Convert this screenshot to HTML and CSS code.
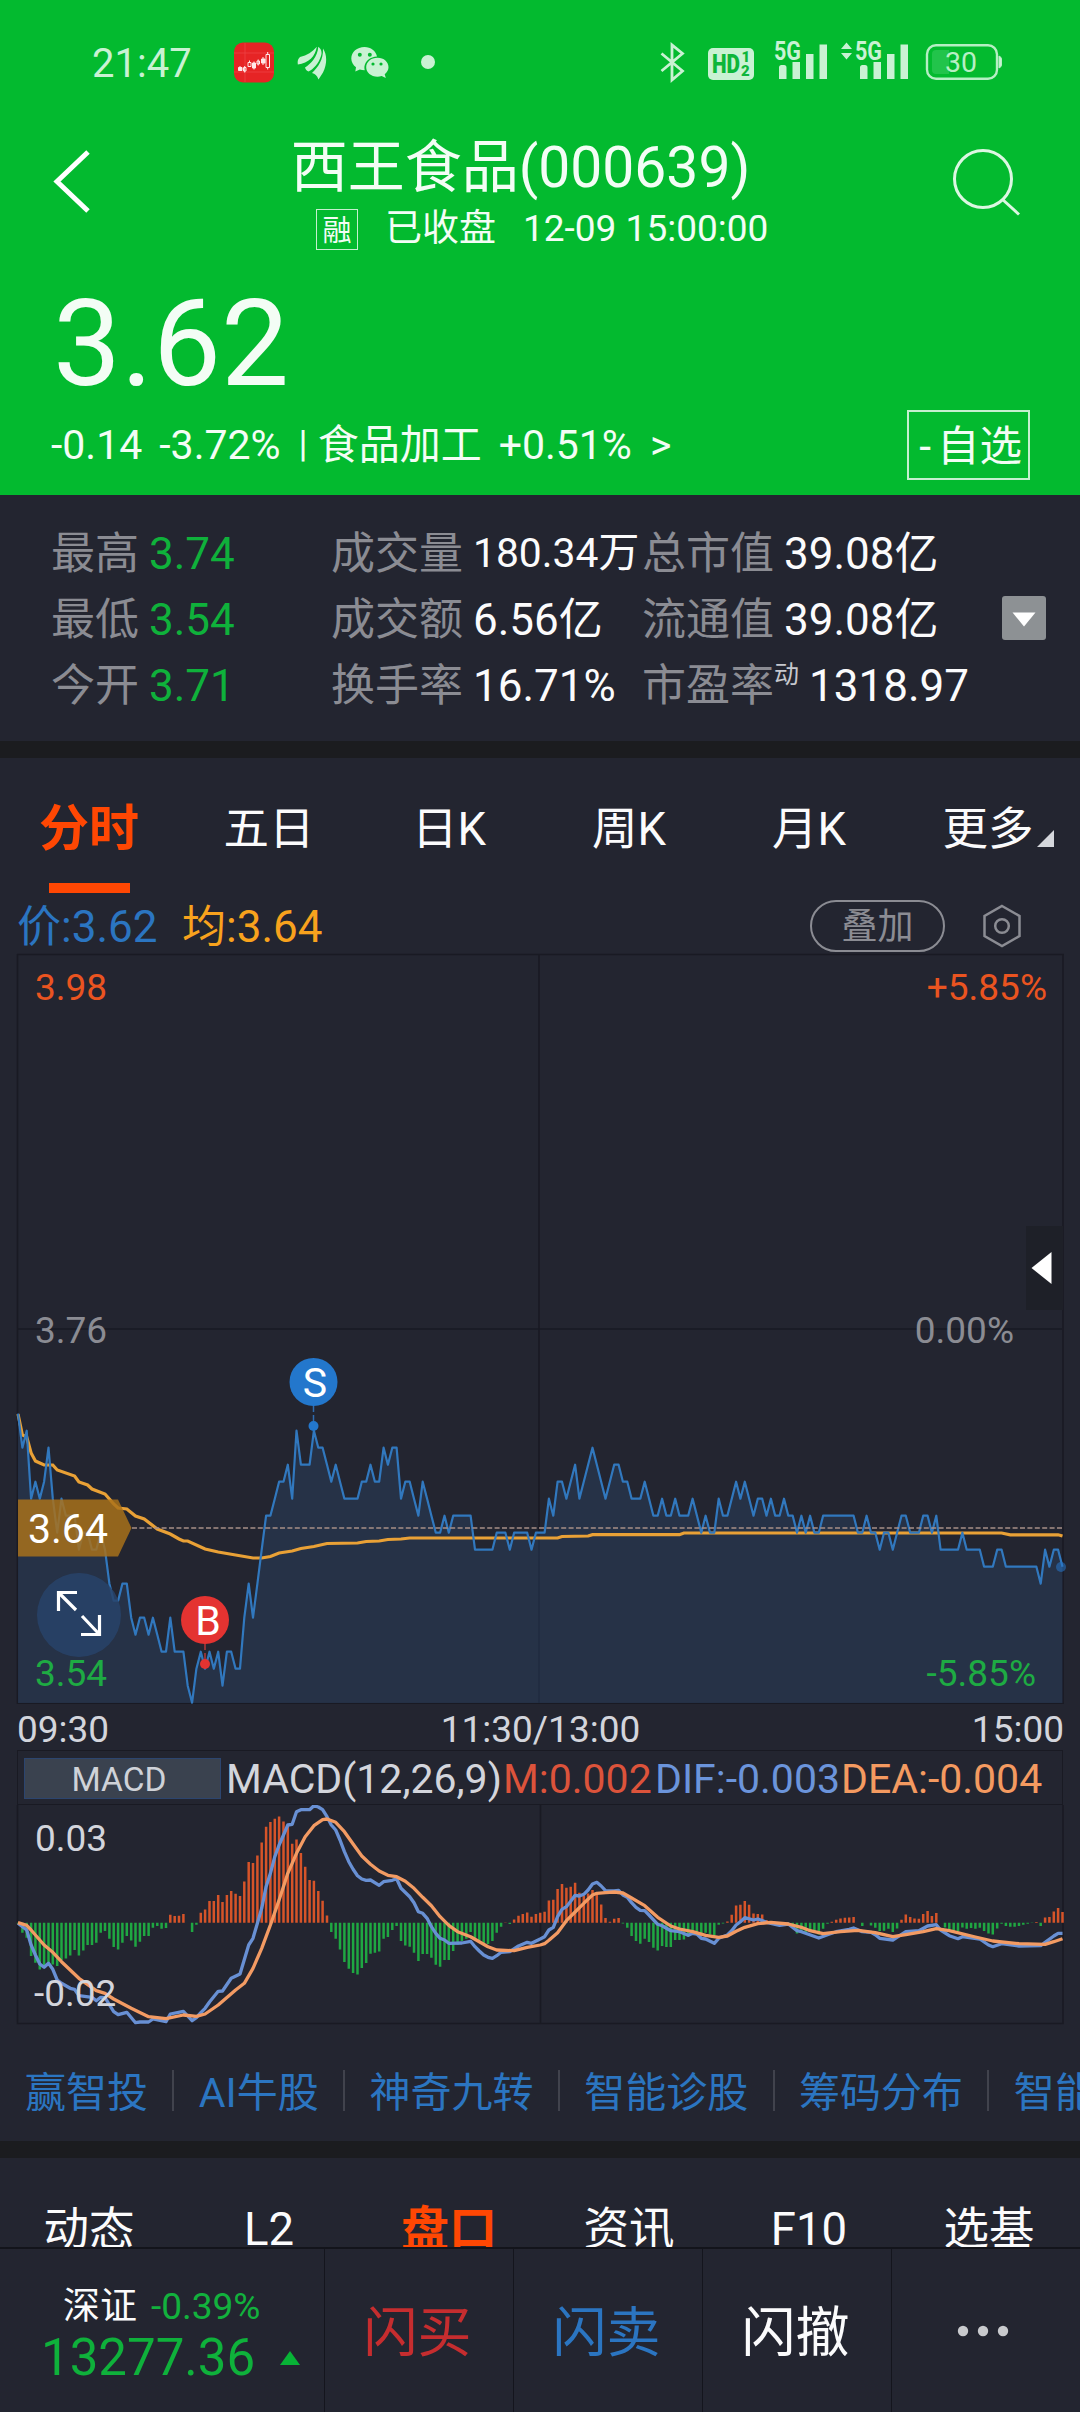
FILE: index.html
```html
<!DOCTYPE html>
<html lang="zh-CN">
<head>
<meta charset="utf-8">
<title>西王食品(000639)</title>
<link rel="stylesheet" href="styles.css">
</head>
<body>
<div class="app">
  <header class="header">
    <div class="status">
      <span class="clock">21:47</span>
      <svg class="status-left" width="230" height="70" viewBox="0 0 230 70">
        <rect x="14" y="12.500" width="40" height="40" rx="9" fill="#e62425"/>
        <path d="M14 23h40M14 42h40M25 13v39" stroke="#ee4548" stroke-width=".7"/>
        <g fill="#ffe9e9" stroke="#ffe9e9" stroke-width="1">
          <path d="M18.500 37.500h3.500v3h-3.500zM32.500 33h3v5h-3zM41.500 29h3.500v4h-3.500z"/>
          <path d="M20 36v2M34 31.500v8M43 27v8"/>
          <path fill="none" d="M23.500 37.500h2.500v3.500h-2.500zM28 32.500h3v4h-3zM37 31h2.500v3h-2.500zM46 24.500h3.500v13h-3.500zM24.700 36v6.500M29.500 30.500v2M38.200 29.500v6M47.700 22v2.500M47.700 37.500v2"/>
        </g>
        <g fill="#c9f2d3">
          <path d="M77.800 34.500C77.300 31 78 28.800 80 27C87 25.500 92.500 22 96.800 16.800C95.500 26 88.500 33.500 77.800 34.500Z"/>
          <path d="M85 37.500C91 33.500 97.500 27 98.300 16.700C101.500 19 102.300 22.500 101 26C98.500 34 93.500 39 88.500 41.500C86.300 40.500 85.300 39 85 37.500Z"/>
          <path d="M92 43C98 37 103.500 30 103 18.500C107 24.500 107.500 33.500 103 42.500L98.500 49.500C97 45.500 95 43.500 92 43Z"/>
          <path fill-rule="evenodd" d="M144.500 17C137 17 131.300 22 131.300 28.500C131.300 32 133 35 136 37.200L135.300 41.500L139.800 39.500Q142 40.200 144.700 40.300Q144.300 38.500 144.400 36.700C145 31 150.500 26.700 157 26.500C156 21 150.800 17 144.500 17ZM139.800 22.800a2 2 0 1 1 0 4a2 2 0 1 1 0-4zM149.800 22.800a2 2 0 1 1 0 4a2 2 0 1 1 0-4z"/>
          <path fill-rule="evenodd" d="M157.500 27.800C151 27.800 146.200 32 146.200 37.300C146.200 42.500 151 46.800 157.500 46.800Q159.500 46.800 161.700 46L165.800 48L164.700 44.200C167 42.500 168.500 40 168.500 37.300C168.500 32 164 27.800 157.500 27.800ZM153 32.400a1.600 1.600 0 1 1 0 3.200a1.600 1.600 0 1 1 0-3.200zM161 32.400a1.600 1.600 0 1 1 0 3.200a1.600 1.600 0 1 1 0-3.200z"/>
          <circle cx="208" cy="32" r="7"/>
        </g>
      </svg>
      <svg class="status-right" width="380" height="70" viewBox="0 0 380 70" fill="#c9f2d3">
        <path d="M21.500 23.500L42.500 41L32 50V15L42.500 23.500L21.500 41" fill="none" stroke="#c9f2d3" stroke-width="2.800"/>
        <rect x="68" y="18" width="46" height="32" rx="5"/>
        <text class="hd" x="72" y="42.800" textLength="28" lengthAdjust="spacingAndGlyphs">HD</text>
        <text class="hd-n" x="101.500" y="31.500">1</text><text class="hd-n" x="101" y="46">2</text>
        <text class="g5" x="134" y="29.500" textLength="27" lengthAdjust="spacingAndGlyphs">5G</text>
        <path d="M139 37.500q0-2.500 2.500-2.500h2.500q2.500 0 2.500 2.500V49H139zM152.500 32h7.500v17h-7.500zM166 24h7.500v25H166zM179.500 14.500h7.500V49h-7.500z"/>
        <path d="M206.500 12.500l5.500 6.500h-11zM206.500 29.500l5.500-6.500h-11z"/>
        <text class="g5" x="215" y="29.500" textLength="27" lengthAdjust="spacingAndGlyphs">5G</text>
        <path d="M220 37.500q0-2.500 2.500-2.500h2.500q2.500 0 2.500 2.500V49H220zM233.500 32h7.500v17h-7.500zM247 24h7.500v25H247zM260.500 14.500h7.500V49h-7.500z"/>
        <rect x="287" y="15.200" width="70" height="33.600" rx="9" fill="none" stroke="#b6efc4" stroke-width="2.400"/>
        <path d="M296 20h13v24h-13q-4 0-4-4V24q0-4 4-4z" fill="#22c44b"/>
        <path d="M359 26q2.500 1 2.500 3v6q0 2-2.500 3z" stroke="#b6efc4"/>
        <text class="bat" x="305" y="42">30</text>
      </svg>
    </div>
    <div class="titlebar">
      <svg class="back" width="50" height="70" viewBox="0 0 50 70"><path d="M38 5L7 34.500L38 64" fill="none" stroke="#fff" stroke-width="5"/></svg>
      <div class="title-mid">
        <h1 class="title">西王食品(000639)</h1>
        <div class="subtitle"><span class="badge">融</span><span class="closed">已收盘</span><span>12-09 15:00:00</span></div>
      </div>
      <svg class="search" width="76" height="76" viewBox="0 0 76 76" fill="none" stroke="#dcf7e2" stroke-width="3"><circle cx="34" cy="35" r="28.500"/><path d="M53 55L70 70.500"/></svg>
    </div>
    <div class="price">3.62</div>
    <div class="change">
      <span class="delta">-0.14</span><span class="pct">-3.72%</span><span class="bar">|</span><span class="sector">食品加工</span><span>+0.51%</span><span class="more-sector">&gt;</span>
      <span class="watch"><span class="minus">-</span>自选</span>
    </div>
  </header>

  <section class="stats">
    <div class="stat-grid">
      <div class="stat"><span class="lbl">最高</span><b class="down">3.74</b></div>
      <div class="stat"><span class="lbl">成交量</span><b class="fit">180.34万</b></div>
      <div class="stat"><span class="lbl">总市值</span><b>39.08亿</b></div>
      <div class="stat"><span class="lbl">最低</span><b class="down">3.54</b></div>
      <div class="stat"><span class="lbl">成交额</span><b>6.56亿</b></div>
      <div class="stat"><span class="lbl">流通值</span><b>39.08亿</b></div>
      <div class="stat"><span class="lbl">今开</span><b class="down">3.71</b></div>
      <div class="stat"><span class="lbl">换手率</span><b>16.71%</b></div>
      <div class="stat"><span class="lbl">市盈率</span><sup>动</sup><b>1318.97</b></div>
    </div>
    <svg class="expand" width="44" height="44" viewBox="0 0 44 44"><rect width="44" height="44" rx="3" fill="#8d9194"/><path d="M10.500 16.500h23L22 30.500z" fill="#fff"/></svg>
  </section>

  <nav class="tabs">
    <span class="tab active">分时</span><span class="tab">五日</span><span class="tab">日K</span><span class="tab">周K</span><span class="tab">月K</span><span class="tab has-more">更多<svg width="17" height="17" viewBox="0 0 17 17"><path d="M17 0V17H0z" fill="#d5d7dc"/></svg></span>
  </nav>

  <div class="legend">
    <span class="l-price">价:3.62</span><span class="l-avg">均:3.64</span>
    <span class="overlay">叠加</span>
    <svg class="settings" width="40" height="44" viewBox="0 0 40 44" fill="none" stroke="#8b8c93" stroke-width="2.500"><path d="M20 2L37.500 12V32L20 42L2.500 32V12z"/><circle cx="20" cy="22" r="6.800"/></svg>
  </div>

  <svg class="chart" width="1080" height="751" viewBox="0 953 1080 751">
    <g class="grid"><path d="M17 954.500H1064M17 1329H1062M17 1703.500H1064M17.500 954V1704M539 954V1704M1063 954V1704"/></g>
    <text class="ax grey" x="35" y="1342.500">3.76</text>
    <text class="ax grey" x="1014" y="1342.500" text-anchor="end">0.00%</text>
    <polygon id="area" class="area"/>
    <polyline id="avg" class="avg"/>
    <polyline id="line" class="line"/>
    <circle cx="1061" cy="1567" r="5" fill="#2676ca" opacity=".55"/>
    <path d="M132 1528H1062" class="dash"/>
    <text class="ax red" x="35" y="1000">3.98</text>
    <text class="ax red" x="1047" y="1000" text-anchor="end">+5.85%</text>
    <text class="ax green" x="1036" y="1686" text-anchor="end">-5.85%</text>
    <path d="M18 1499.500H118L131.500 1528L118 1556.500H18z" fill="#a9711a" fill-opacity=".84"/>
    <text x="28" y="1543" class="tagtext">3.64</text>
    <circle cx="79" cy="1615" r="42" fill="#28436a" fill-opacity=".85"/>
    <path d="M58.500 1611V1592.500H77M59 1593L76 1610M82 1616L99 1634M81 1634.500H99.500V1615" fill="none" stroke="#fff" stroke-width="3.200"/>
    <text class="ax green" x="35" y="1686">3.54</text>
    <path d="M313.500 1405V1426" class="mark-s"/><circle cx="313.500" cy="1382" r="24" fill="#2377cc"/><circle cx="313.500" cy="1426" r="5" fill="#2377cc"/>
    <text x="315" y="1397" class="mark">S</text>
    <path d="M205 1643V1664" class="mark-b"/><circle cx="205" cy="1620" r="24" fill="#e43331"/><circle cx="205" cy="1664" r="5" fill="#e43331"/>
    <text x="208" y="1635" class="mark">B</text>
    <rect x="1026" y="1226" width="37" height="84" fill="#1e2028"/><path d="M1051.500 1252V1284L1031.500 1268z" fill="#fff"/>
  </svg>

  <div class="times"><span>09:30</span><span>11:30/13:00</span><span>15:00</span></div>

  <div class="macd-head"><span class="macd-btn">MACD</span><span class="m-name">MACD(12,26,9)</span><span class="m-m">M:0.002</span><span class="m-dif">DIF:-0.003</span><span class="m-dea">DEA:-0.004</span></div>
  <svg class="macd" width="1080" height="220" viewBox="0 1805 1080 220">
    <g class="grid"><path d="M17.500 1805V2023.500H1063V1805M540.500 1805V2023"/></g>
    <path id="up" stroke="#d65429" stroke-width="2.500"/><path id="dn" stroke="#1fa742" stroke-width="2.500"/>
    <polyline id="dif" class="dif"/><polyline id="dea" class="dea"/>
    <text class="ax pale" x="35" y="1851">0.03</text><text class="ax pale" x="34" y="2005.500">-0.02</text>
  </svg>

  <nav class="links"><span>赢智投</span><i></i><span>AI牛股</span><i></i><span>神奇九转</span><i></i><span>智能诊股</span><i></i><span>筹码分布</span><i></i><span>智能盯盘</span></nav>

  <nav class="tabs lower"><span class="tab">动态</span><span class="tab">L2</span><span class="tab active">盘口</span><span class="tab">资讯</span><span class="tab">F10</span><span class="tab">选基</span></nav>

  <footer class="bottom">
    <div class="index"><div class="idx-top"><span>深证</span><em>-0.39%</em></div><div class="idx-val">13277.36<svg width="20" height="14" viewBox="0 0 20 14"><path d="M10 0L20 14H0z" fill="#08b336"/></svg></div></div>
    <span class="act buy">闪买</span><span class="act sell">闪卖</span><span class="act">闪撤</span>
    <span class="act dots"><svg width="56" height="12" viewBox="0 0 56 12" fill="#c9cacd"><circle cx="8" cy="6" r="5.200"/><circle cx="28" cy="6" r="5.200"/><circle cx="48" cy="6" r="5.200"/></svg></span>
  </footer>
</div>
<script src="chart.js"></script>
</body>
</html>
```
FILE: styles.css
```css
* { box-sizing: border-box; }
body { margin: 0; background: #232530; }
.app {
  width: 1080px; height: 2412px; overflow: hidden;
  display: flex; flex-direction: column;
  background: #232530; color: #fbfbfc;
  font-family: Roboto, "Noto Sans CJK SC", sans-serif;
  line-height: 1.172;
  white-space: nowrap;
}
.app > * { flex-shrink: 0; }
svg { display: block; flex-shrink: 0; }

.header { height: 495px; background: #03ba2f; color: #f3fdf5; display: flex; flex-direction: column; }
.status { height: 124px; padding: 30px 60px 0 92px; display: flex; align-items: flex-start; color: #c9f2d3; }
.clock { width: 128px; font-size: 40px; line-height: 67px; }
.status-right { margin-left: 190px; }
.hd { font: 900 25px Roboto; fill: #0db63a; }
.hd-n { font: 900 15px Roboto; fill: #0db63a; }
.g5 { font: 700 25px Roboto; }
.bat { font: 400 28.500px Roboto; fill: #b6efc4; }

.titlebar { height: 138px; padding: 0 55px 0 50px; display: flex; align-items: flex-start; }
.back { margin-top: 23px; }
.title-mid { flex: 1; padding-left: 29px; }
.title { margin: 0; text-align: center; font-size: 57px; line-height: 88px; height: 84px; font-weight: 400; padding-right: 37px; }
.subtitle { display: flex; align-items: center; height: 42px; padding-left: 187px; font-size: 37px; }
.badge { width: 42px; height: 41px; margin-right: 27px; border: 1.500px solid #c5f0cf; font-size: 29px; line-height: 42px; text-align: center; }
.closed { margin-right: 27px; }
.search { margin-top: 20px; }
.price { height: 146px; padding-left: 53px; font-size: 121px; line-height: 164px; }
.change { display: flex; align-items: center; height: 76px; padding: 0 50px 2px 51px; font-size: 41px; }
.pct { margin-left: 17px; }
.bar { margin: -2px 10px 0 18px; font-size: 37px; }
.sector { margin-right: 17px; }
.more-sector { margin-left: 18px; }
.watch { margin: 0 0 0 auto; width: 123px; height: 70px; border: 2px solid #c5f0cf; display: flex; align-items: center; justify-content: flex-end; padding: 3px 6px 0 0; font-size: 42.500px; }
.minus { margin-right: 6px; }

.stats { height: 246px; padding: 26px 34px 0 51px; display: flex; align-items: flex-start; }
.stat-grid { display: grid; grid-template-columns: 280px 311px 360px; grid-auto-rows: 66px; margin-top: 1px; }
.stat { display: flex; align-items: center; font-size: 44px; }
.stat b { font-weight: 400; margin-left: 10px; }
.stat b.fit { font-size: 40.800px; margin-top: -3px; }
.stat b.down { color: #0fb13b; }
.lbl { color: #8b8c93; }
.stat sup { font-size: 25px; line-height: 30px; align-self: flex-start; margin-top: 6px; color: #c6c8ce; }
.expand { margin-top: 75px; }

.tabs { height: 160px; border-top: 17px solid #1b1c1f; display: grid; grid-template-columns: repeat(6, 180px); }
.tab { display: flex; justify-content: center; align-items: center; height: 140px; padding: 3px 2px 0 0; font-size: 45.500px; }
.tab.active { color: #ff4703; font-weight: 700; font-size: 50px; position: relative; }
.tabs:not(.lower) .active::after { content: ""; position: absolute; left: 49px; bottom: 5px; width: 81px; height: 10px; background: #ff4703; }
.has-more svg { margin: 18px 0 0 3px; }
.tab.has-more { padding-left: 18px; }

.legend { height: 52px; margin-top: -1px; padding: 0 58px 0 17px; display: flex; align-items: center; font-size: 44px; }
.l-price { color: #2b75c1; width: 165px; padding-top: 3px; }
.l-avg { color: #f8a21d; padding-top: 3px; }
.overlay { margin-left: auto; width: 135px; height: 52px; border: 2px solid #8b8c93; border-radius: 26px; color: #8b8c93; font-size: 36px; line-height: 51px; text-align: center; }
.settings { margin-left: 37px; }

.chart { margin-top: 1px; }
.grid path { fill: none; stroke: #191a23; stroke-width: 1.600; }
.ax { font-size: 37px; }
.grey { fill: #8b8c93; }
.red { fill: #ea5420; }
.green { fill: #1eab43; }
.pale { fill: #d3d5dc; }
.area { fill: #2b4468; fill-opacity: .42; }
.avg { fill: none; stroke: #e9a136; stroke-width: 3.200; }
.line { fill: none; stroke: #3178be; stroke-width: 2.200; stroke-linejoin: round; }
.dash { stroke: #a78f87; stroke-width: 1.600; stroke-dasharray: 5 2.400; }
.tagtext { font-size: 41px; fill: #fff; }
.mark { font-size: 41px; fill: #fff; text-anchor: middle; }
.mark-s { stroke: #2f6caf; stroke-width: 1.500; stroke-dasharray: 7 3; }
.mark-b { stroke: #b13838; stroke-width: 1.500; stroke-dasharray: 7 3; }

.times { height: 46px; padding: 5px 16px 0 17px; display: flex; justify-content: space-between; align-items: center; font-size: 37px; color: #d3d5dc; }
.macd-head { height: 55px; margin: 0 17px; border: 1.500px solid #191a23; display: flex; align-items: center; font-size: 41px; padding: 2px 0 0 6px; }
.macd-btn { width: 197px; height: 41px; margin: 0 5px 0 0; padding-right: 7px; background: #3a424f; border: 1.500px solid #2c456f; color: #cfd2d8; font-size: 33.500px; line-height: 41px; text-align: center; }
.m-name { color: #d3d5dc; width: 277px; padding-top: 2px; }
.m-m { color: #dc533b; width: 152px; padding-top: 2px; }
.m-dif { color: #6b94db; width: 186px; padding-top: 2px; }
.m-dea { color: #f49a60; padding-top: 2px; }
.dif { fill: none; stroke: #6890d4; stroke-width: 3.300; stroke-linejoin: round; }
.dea { fill: none; stroke: #f39b63; stroke-width: 3.300; stroke-linejoin: round; }

.links { height: 116px; padding: 20px 0 0 25px; display: flex; align-items: center; gap: 24.400px; font-size: 41px; color: #2b75c1; }
.links i { width: 2px; height: 41px; background: #41434d; flex-shrink: 0; margin-top: -6px; }
.links span { flex-shrink: 0; }

.lower { height: 106px; overflow: hidden; }
.lower .tab { height: 140px; padding-top: 4px; }
.lower .active { font-size: 48px; }

.bottom { height: 165px; border-top: 2px solid #13141b; display: grid; grid-template-columns: 325px 189px 189px 189px 188px; }
.bottom > * { border-right: 1.500px solid #14151d; }
.bottom > :last-child { border: 0; }
.index { padding: 36px 0 0 41px; }
.idx-top { display: flex; align-items: center; height: 44px; padding-left: 22px; font-size: 37px; }
.idx-top em { font-style: normal; color: #12b13d; margin-left: 14px; }
.idx-val { display: flex; align-items: center; height: 58px; font-size: 51px; color: #0fb13b; gap: 25px; }
.act { display: flex; align-items: center; justify-content: center; font-size: 54px; padding: 7px 3px 0 0; }
.dots { padding: 0 6px 0 0; }
.buy { color: #c62d2f; }
.sell { color: #2b75c1; }
```
FILE: chart.js
```js
// Minute index (0-240) to x coordinate.
const X = i => (18 + i * 4.352).toFixed(1);
const poly = (id, data, y) =>
  document.getElementById(id).setAttribute('points', data.map(([i, v]) => X(i) + ',' + y(v).toFixed(1)).join(' '));
const parse = s => s.trim().split(/\s+/).map(p => p.split(':').map(Number));

// Price, in cents above 3.54.
const price = parse(`0:17 1:15 2:16 3:12 4:13 5:12 6:13 7:15 8:12 9:10 10:12 11:11 13:11 14:9 15:10 16:10 17:9 18:9 19:10 20:9
21:7 22:6 23:6 24:7 25:7 26:5 27:4 28:5 29:5 30:4 31:5 32:4 33:3 34:3 35:5 36:3 38:3 39:1 40:0 41:2 42:3 43:2 44:3 45:2 46:3 47:1
48:3 49:3 50:2 51:2 52:5 53:7 54:5 55:7 56:9 57:11 58:11 59:12 60:13 61:13 62:14 63:12 64:16 65:14 67:14 68:16 69:15 70:15 71:14
72:13 73:14 74:13 75:12 78:12 79:13 80:13 81:14 82:13 83:13 84:15 85:14 86:15 87:15 88:12 89:13 90:13 91:12 92:11 93:13 94:12 95:11
96:10 97:10 98:11 99:10 100:11 104:11 105:9 109:9 110:10 112:10 113:9 114:10 117:10 118:9 119:10 121:10 122:12 123:11 124:13 125:13
126:12 127:13 128:14 129:12 132:15 135:12 137:14 138:14 139:13 140:13 141:12 143:12 144:13 146:11 147:11 148:12 149:11 150:11
151:12 152:11 154:11 155:12 157:10 158:11 159:10 160:10 161:12 162:11 163:11 165:13 166:12 167:13 169:11 170:12 171:12 172:11
173:12 174:11 175:11 176:12 177:11 178:11 179:10 180:11 181:10 182:11 183:10 184:10 185:11 192:11 193:10 194:10 195:11 196:10
197:10 198:9 199:10 200:10 201:9 202:10 203:11 204:11 205:10 207:10 208:11 209:11 210:10 211:11 212:9 216:9 217:10 218:9 221:9
222:8 224:8 225:9 226:9 227:8 234:8 235:7 236:9 237:8 238:9 239:9 240:8`);
const priceY = v => 1702.7 - v * 17;
poly('line', price, priceY);
document.getElementById('area').setAttribute('points',
  '18,1703 ' + price.map(([i, v]) => X(i) + ',' + priceY(v).toFixed(1)).join(' ') + ' 1062.5,1703');

// Average price.
const avg = parse(`0:1414 1:1435 2:1437 3:1453 4:1461 5:1463 6:1465 8:1465 9:1470 13:1476 14:1482 16:1485 17:1489 20:1494
21:1499 22:1504 23:1508 25:1509 27:1516 29:1519 32:1529 35:1534 37:1539 38:1541 39:1541 43:1549 46:1552 50:1555 54:1558
56:1558 58:1556.5 60:1553 63:1551 65:1548.5 68:1546.5 71:1543.5 78:1543 80:1541.5 83:1541 85:1539.5 88:1539 90:1538 124:1538
125:1536.5 131:1536 132:1534.7 152:1534.7 153:1533 226:1533 228:1534.8 239:1534.8 240:1536`);
poly('avg', avg, v => v);

// Histogram, one value per minute.
const bars = `-2 -30 -45 -100 -120 -140 -130 -120 -125 -130 -112 -107 -98 -82 -98 -83 -67 -67 -60 -30 -25 -48 -73 -80 -60 -40 -53 -72
-57 -40 -40 -15 -10 -18 -16 24 20 21 26 0 -28 -6 30 40 65 65 83 62 83 95 87 80 124 182 179 202 241 288 302 312 319 304 290 237 250
209 168 128 126 95 66 22 -28 -48 -80 -118 -138 -151 -155 -136 -121 -93 -90 -86 -48 -43 -22 -10 -55 -68 -72 -90 -115 -94 -94 -105
-126 -132 -112 -112 -85 -66 -55 -48 -28 -48 -53 -62 -64 -55 -30 -12 1 -4 10 21 26 31 18 26 30 33 67 69 101 116 105 108 120 90 82
88 98 85 55 14 3 12 14 -2 -15 -40 -55 -63 -48 -58 -75 -83 -70 -73 -73 -52 -52 -50 -42 -30 -35 -38 -30 -35 -38 -6 -2 4 24 52 54 65
54 28 26 25 8 5 -5 -8 -5 -4 -15 -32 -25 -30 -28 -30 -35 -18 -3 3 9 13 15 16 17 0 -10 0 -8 -15 -25 -24 -18 -28 -17 9 25 17 13 12
26 35 20 29 0 -14 -25 -28 -26 -14 -18 -16 -18 -15 -25 -32 -35 -17 -3 -10 -12 -12 -10 -6 -3 -1 2 -10 16 17 34 44 32`.split(/\s+/).map(Number);
let up = '', dn = '';
bars.forEach((v, i) => {
  const d = `M${X(i)} 1922.7v${(-v / 3).toFixed(1)}`;
  if (v > 0) up += d; else if (v < 0) dn += d;
});
document.getElementById('up').setAttribute('d', up);
document.getElementById('dn').setAttribute('d', dn);

const macdY = v => 1700 + v / 3;
poly('dif', parse(`0:670 2:690 3:735 4:765 5:792 6:802 7:790 8:808 9:840 10:850 12:865 13:868 14:887 17:892 18:902 19:892 20:893
22:935 23:944 25:937 27:968 28:966 30:966 31:957 34:965 35:942 38:934 39:948 40:962 41:953 42:938 43:925 44:906 46:874 47:873
49:835 51:822 53:735 54:715 55:670 56:625 57:560 58:520 59:470 60:435 61:405 62:375 63:373 64:335 65:329 67:329 68:317 69:321
70:329 71:350 72:375 73:390 74:420 75:455 76:485 77:508 78:527 79:537 80:541 81:540 83:556 84:545 86:541 87:536 88:565 90:590
91:608 92:635 93:640 94:655 95:680 96:700 97:715 98:720 99:730 102:729 104:724 105:740 106:753 107:765 108:772 109:775 110:767
111:757 113:755 115:738 117:727 118:730 120:717 121:710 122:690 123:682 124:650 125:628 126:620 127:604 128:586 129:588 130:583
131:570 132:552 133:547 134:558 135:572 137:573 138:571 139:585 140:592 141:608 142:622 143:631 144:632 145:645 147:673 148:677
150:692 152:695 154:706 155:700 156:702 157:715 158:717 160:730 161:715 163:705 164:692 165:675 166:665 167:653 169:660 170:657
172:667 175:676 177:672 179:692 180:695 184:714 186:704 188:695 191:688 192:684 194:695 196:697 197:704 198:715 201:720 203:703
204:695 207:692 209:678 211:674 212:690 214:707 216:716 217:710 221:717 223:735 224:740 226:731 230:738 235:737 236:727 238:708
239:700 240:700`), macdY);
poly('dea', parse(`0:668 2:676 3:690 4:705 6:735 8:757 10:785 14:835 18:872 20:880 22:897 26:925 30:950 34:956 38:945 41:949
43:942 46:915 50:870 52:850 54:805 56:745 58:675 60:600 62:520 64:460 66:410 68:377 70:359 71:357 73:367 75:395 77:432 79:468
81:493 83:513 85:526 87:530 89:544 91:565 93:592 95:617 97:650 99:676 101:695 104:710 106:725 108:740 110:750 114:752 117:742
120:735 121:731 122:721 124:698 126:662 128:636 130:610 132:585 133:580 135:578 137:576 139:579 141:594 144:617 147:652 150:678
152:687 155:695 158:706 161:712 163:708 165:694 167:682 170:671 173:667 177:672 180:682 182:692 185:701 189:695 193:691 197:698
201:710 204:704 208:695 211:686 214:692 220:711 224:723 230:731 236:733 238:725 240:716`), macdY);
```
